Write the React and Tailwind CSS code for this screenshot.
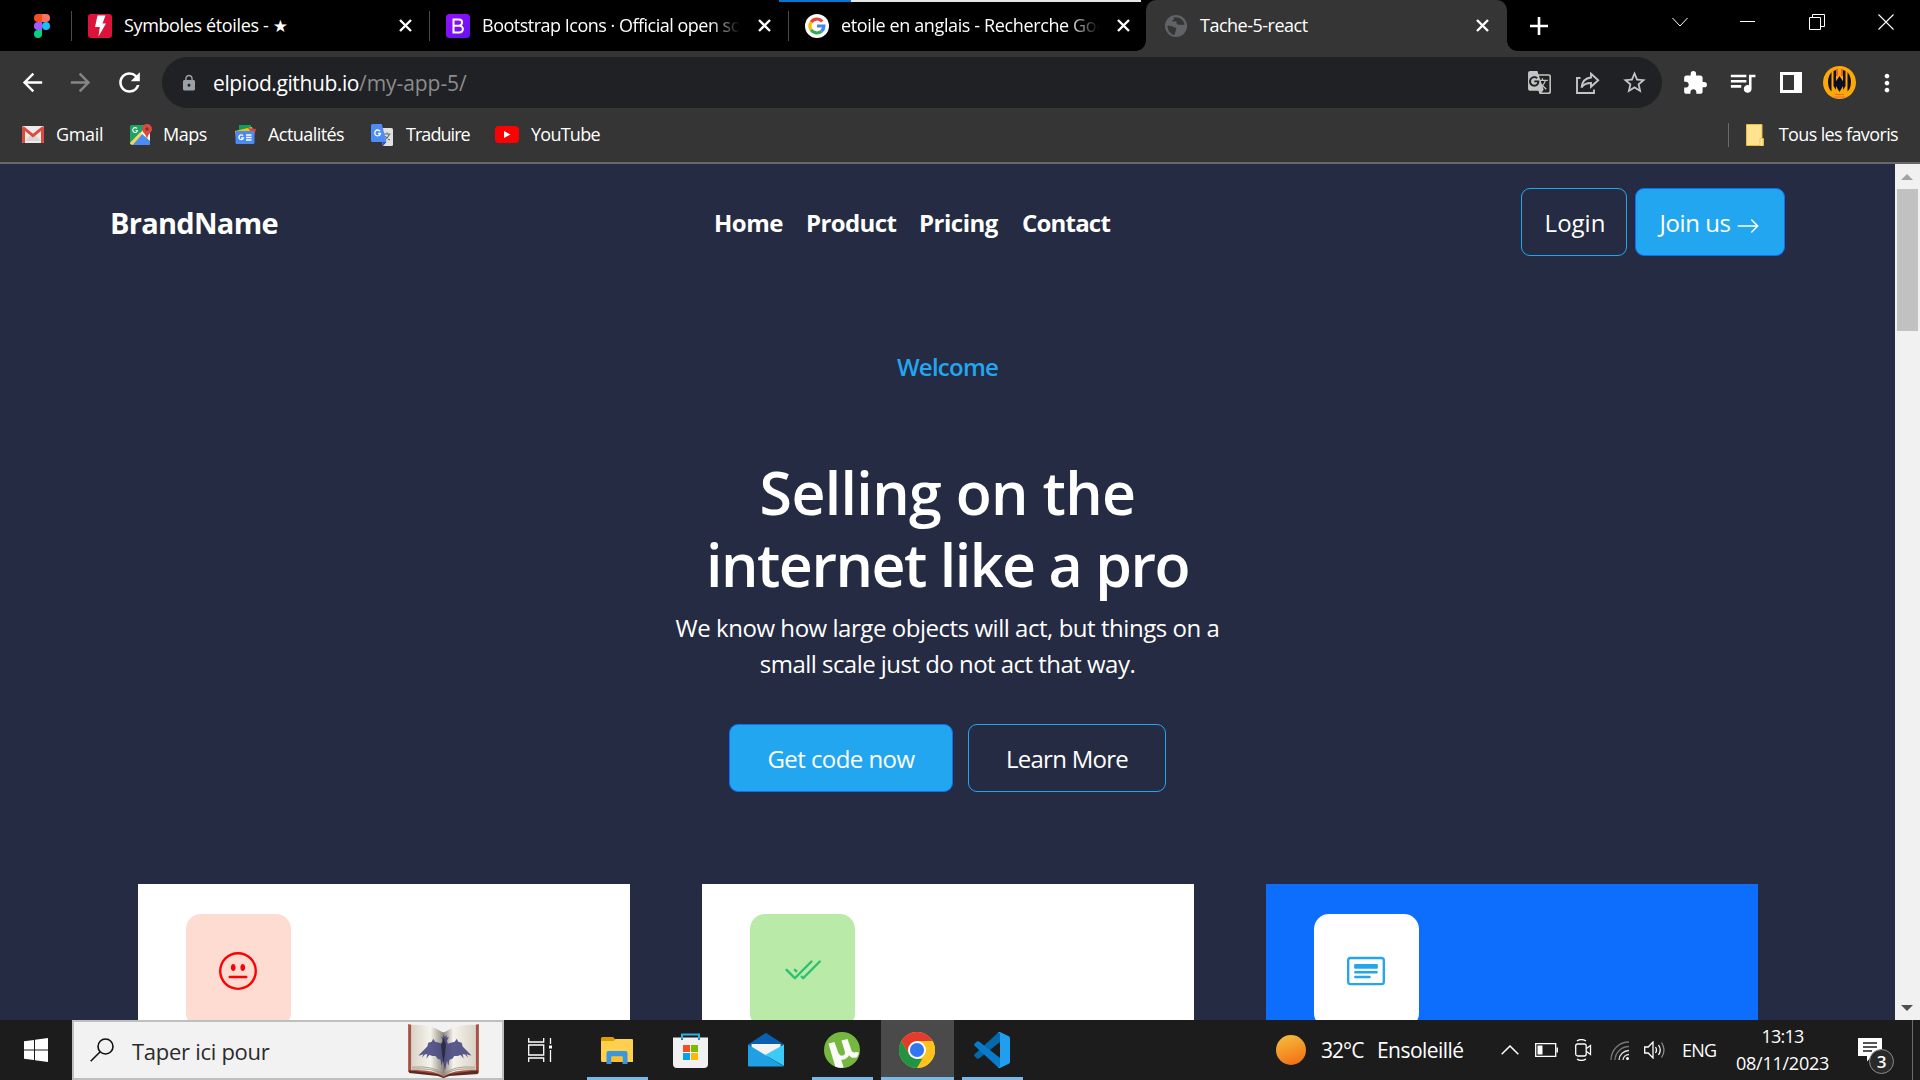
import React from "react";
import { BsArrowRight, BsCardHeading, BsCheck2All, BsEmojiNeutral } from "react-icons/bs";
import {
  MdArrowBack,
  MdArrowForward,
  MdExtension,
  MdGTranslate,
  MdLock,
  MdMoreVert,
  MdQueueMusic,
  MdRefresh,
  MdStarBorder,
} from "react-icons/md";

/* ---------- browser: tab strip ---------- */

function CloseX({ className }) {
  return (
    <svg viewBox="0 0 13 13" className={`h-[13px] w-[13px] shrink-0 ${className}`} fill="none" stroke="#fff" strokeWidth="2.4">
      <path d="M1 1l11 11M12 1L1 12" />
    </svg>
  );
}

function FigmaIcon() {
  return (
    <svg viewBox="0 0 16 24" className="ml-[34px] h-6 w-4 shrink-0">
      <path d="M4 0h4v8H4a4 4 0 010-8z" fill="#f24e1e" />
      <path d="M8 0h4a4 4 0 010 8H8z" fill="#ff7262" />
      <path d="M4 8h4v8H4a4 4 0 010-8z" fill="#a259ff" />
      <circle cx="12" cy="12" r="4" fill="#1abcfe" />
      <path d="M4 16h4v4a4 4 0 11-4-4z" fill="#0acf83" />
    </svg>
  );
}

function BoltIcon() {
  return (
    <svg viewBox="0 0 24 24" className="ml-4 h-6 w-6 shrink-0">
      <rect width="24" height="24" rx="3" fill="#dc143c" />
      <path d="M9.500 1.500h8L14.500 9.500H18L10.500 22.500 11.800 13H7z" fill="#fff" />
    </svg>
  );
}

function BootstrapIcon() {
  return (
    <svg viewBox="0 0 24 24" className="ml-4 h-6 w-6 shrink-0">
      <defs>
        <linearGradient id="bsGrad" x1="0" y1="0" x2="1" y2="1">
          <stop offset="0" stopColor="#9013fe" />
          <stop offset="1" stopColor="#6610f2" />
        </linearGradient>
      </defs>
      <rect width="24" height="24" rx="3.500" fill="url(#bsGrad)" />
      <path d="M7.500 5.500h5.500a3.100 3.100 0 010 6.200H7.500zM7.500 11.700h6a3.400 3.400 0 010 6.800h-6z" fill="none" stroke="#fff" strokeWidth="2" />
    </svg>
  );
}

function GoogleIcon() {
  return (
    <svg viewBox="0 0 24 24" className="ml-4 h-6 w-6 shrink-0" fill="none" strokeWidth="3.200">
      <circle cx="12" cy="12" r="12" fill="#fff" />
      <path d="M17.300 7.500A7 7 0 006.100 8.200" stroke="#ea4335" />
      <path d="M6.100 8.200a7 7 0 000 7.600" stroke="#fbbc05" />
      <path d="M6.100 15.800a7 7 0 0010.400 1.500" stroke="#34a853" />
      <path d="M16.500 17.300A7 7 0 0018.900 12H12" stroke="#4285f4" />
    </svg>
  );
}

function GlobeIcon() {
  return (
    <svg viewBox="0 0 22 22" className="ml-[19px] h-[22px] w-[22px] shrink-0">
      <circle cx="11" cy="11" r="11" fill="#5f6368" />
      <path d="M2.500 10.500c2 .5 4.500.2 6 1.500 1.500.4 3.500.6 2.500 3l-1.500 5C5.500 19.500 2.500 15.500 2.500 10.500z" fill="#353535" />
      <path d="M8.500 2.500C10 4 8 5 7 6c1 1.500 3-.5 4.500.5.500 1.500-.5 2 1 3s3.500-.5 5 .500l2-.5C19 5.500 14.500 1.500 8.500 2.500z" fill="#353535" />
    </svg>
  );
}

function TabStrip() {
  return (
    <div className="relative flex h-[51px] items-center bg-black text-[18px] whitespace-nowrap text-white">
      <div className="flex h-[30px] w-[71px] items-center"><FigmaIcon /></div>
      <div className="flex h-[30px] w-[358px] items-center border-l border-[#4a4a4a]">
        <BoltIcon />
        <span className="ml-[12px] w-[270px] tracking-[-0.36px]">Symboles étoiles - <span className="font-['DejaVu_Sans'] text-[17px]">★</span></span>
        <CloseX className="ml-[5px]" />
      </div>
      <div className="flex h-[30px] w-[359px] items-center border-l border-[#4a4a4a]">
        <BootstrapIcon />
        <span className="ml-[12px] w-[258px] overflow-hidden mask-r-from-88% mask-r-to-100% tracking-[-0.5px]">Bootstrap Icons · Official open source</span>
        <CloseX className="ml-[18px]" />
      </div>
      <div className="flex h-[30px] w-[358px] items-center border-l border-[#4a4a4a]">
        <GoogleIcon />
        <span className="ml-[12px] w-[258px] overflow-hidden mask-r-from-88% mask-r-to-100% tracking-[-0.38px]">etoile en anglais - Recherche Google</span>
        <CloseX className="ml-[18px]" />
      </div>
      <div className="relative flex h-[51px] w-[361px] items-center rounded-t-[10px] bg-[#353535]">
        <span className="absolute bottom-0 -left-2.5 h-2.5 w-2.5 bg-[radial-gradient(circle_at_0_0,transparent_9.5px,#353535_10px)]" />
        <span className="absolute -right-2.5 bottom-0 h-2.5 w-2.5 bg-[radial-gradient(circle_at_100%_0,transparent_9.5px,#353535_10px)]" />
        <GlobeIcon />
        <span className="ml-[13px] w-[260px] tracking-[-0.5px]">Tache-5-react</span>
        <CloseX className="ml-[16px]" />
      </div>
      <svg viewBox="0 0 18 18" className="ml-[23px] h-[18px] w-[18px]" stroke="#fff" strokeWidth="2.600"><path d="M9 0v18M0 9h18" /></svg>
      <div className="mb-2 ml-auto flex items-center pr-[26px]">
        <svg viewBox="0 0 16 16" className="h-4 w-4" fill="none" stroke="#fff"><path d="M.5 4l7.500 8 7.500-8" /></svg>
        <svg viewBox="0 0 15 16" className="ml-[52px] h-4 w-[15px]" fill="none" stroke="#fff"><path d="M0 7.500h15" /></svg>
        <svg viewBox="0 0 16 16" className="ml-[54px] h-4 w-4" fill="none" stroke="#fff"><path d="M.5 3.500h11v12H.5zM3.500 3.500v-3h12v12h-4" /></svg>
        <svg viewBox="0 0 16 16" className="ml-[53px] h-4 w-4" fill="none" stroke="#fff" strokeWidth="1.100"><path d="M.5.5l15 15M15.500.5l-15 15" /></svg>
      </div>
      <div className="absolute top-0 left-[779px] flex h-0.5 w-[362px] bg-[#e6e6e6]"><span className="h-0.5 w-[72px] bg-[#0078d7]" /></div>
    </div>
  );
}

/* ---------- browser: toolbar and bookmarks ---------- */

function Avatar() {
  return (
    <svg viewBox="0 0 33 33" className="ml-[21px] h-[33px] w-[33px]">
      <circle cx="16.500" cy="16.500" r="16.500" fill="#fba80a" />
      <path d="M6.500 9q-3 7 0 14l2 2.500V6zM26.500 9q3 7 0 14l-2 2.500V6z" fill="#17100a" />
      <path d="M10.500 5v15l2.500 4V4zM22.500 5v15L20 24V4z" fill="#17100a" />
      <path d="M16.500 10l5 7.500-5 8.500-5-8.500z" fill="#0b0b2c" />
      <path d="M14 3v7M19 3v7" stroke="#e02a50" strokeWidth="1.200" />
      <path d="M12 28.500h9M11 31h11" stroke="#f0673a" strokeWidth="1.200" />
    </svg>
  );
}

function Toolbar() {
  return (
    <div className="flex h-[63px] items-center bg-[#353535] text-white">
      <MdArrowBack className="ml-[18px] h-[29px] w-[29px]" />
      <MdArrowForward className="ml-[19px] h-[29px] w-[29px] text-[#868686]" />
      <MdRefresh className="ml-[19px] h-[31px] w-[31px]" />
      <div className="ml-[17px] flex h-[51px] w-[1500px] items-center rounded-full bg-[#202124] text-[21px] text-[#c4c4c4]">
        <MdLock className="ml-[18px] h-[18px] w-[18px] text-[#9aa0a6]" />
        <span className="ml-[15px] pt-0.5 tracking-[-0.07px] whitespace-nowrap text-[#8c8c8c]"><span className="tracking-[-0.4px] text-white">elpiod.github.io</span>/my-app-5/</span>
        <MdGTranslate className="ml-auto h-[25px] w-[25px]" />
        <svg viewBox="0 0 24 22" className="ml-6 h-[22px] w-6" fill="none" stroke="currentColor" strokeWidth="1.900">
          <path d="M4.500 6H1v15h17v-3.500" />
          <path d="M15 1.800l7.200 6.500-7.200 6.500v-3.800c-4.500 0-7.500 1.300-9.500 4.500.5-5.500 3.500-9.300 9.500-10z" />
        </svg>
        <MdStarBorder className="mr-[14px] ml-[21px] h-[27px] w-[27px]" />
      </div>
      <MdExtension className="ml-[20px] h-[26px] w-[26px]" />
      <MdQueueMusic className="ml-[19px] h-[31px] w-[31px]" />
      <svg viewBox="0 0 22 21" className="ml-[22px] h-[21px] w-[22px]"><path d="M0 0h22v21H0zM3 3v15h11V3z" fill="#fff" fillRule="evenodd" /></svg>
      <Avatar />
      <MdMoreVert className="ml-[17px] h-[28px] w-[28px]" />
    </div>
  );
}

function BookmarksBar() {
  return (
    <div className="flex h-[50px] items-center border-b-2 border-[#696868] bg-[#353535] pb-[7px] text-[18px] whitespace-nowrap text-white">
      <svg viewBox="0 0 22 17" className="mr-[12px] ml-[22px] h-[17px] w-[22px]">
        <rect width="22" height="17" rx="1.500" fill="#eceaea" />
        <path d="M3 15l5.500-6h5L19 15z" fill="#d8d5d5" />
        <path d="M0 1.500v14A1.500 1.500 0 001.500 17H3V5l8 6.500L19 5v12h1.500a1.500 1.500 0 001.500-1.500v-14L20 .5l-9 7.300L2 .5z" fill="#dd4b3e" />
      </svg>
      <span className="w-[74px] tracking-[-0.35px]">Gmail</span>
      <svg viewBox="0 0 22 22" className="h-[22px] w-[22px]">
        <rect y="1" width="20" height="20" rx="1.500" fill="#1da462" />
        <path d="M2 21L12 10l8 8v3z" fill="#4c8bf5" />
        <path d="M0 19L15 4l5 3v10l-8-7-9.500 10.500z" fill="#f4f4f4" />
        <path d="M0 19.500L10 8.500l2 1.800L2.500 21z" fill="#ffd34d" />
        <path d="M7 4.500a2.400 2.400 0 10.500 2H5.500" fill="none" stroke="#fff" strokeWidth="1.100" />
        <path d="M17 0a5 5 0 015 5c0 3.500-4 4.500-5 10-1-5.500-5-6.500-5-10a5 5 0 015-5z" fill="#dd4b3e" />
        <circle cx="17" cy="5" r="1.700" fill="#822f2b" />
      </svg>
      <span className="ml-[11px] w-[71px] tracking-[-0.45px]">Maps</span>
      <svg viewBox="0 0 22 19" className="h-[19px] w-[22px]">
        <path d="M5 0h12v8H5z" fill="#0f9d58" />
        <path d="M1 6l17-4 2 6L2 12z" fill="#f4c20d" />
        <path d="M14 3l8 1-2 7z" fill="#db4437" />
        <rect x="1.500" y="6" width="19" height="13" rx="1.500" fill="#4a8af4" />
        <path d="M9 10.800A2.300 2.300 0 109.400 13H7.300M12 10h5.500M12 12.500h5.500M12 15h5.500" fill="none" stroke="#fff" strokeWidth="1.300" />
      </svg>
      <span className="ml-[12px] w-[103px] tracking-[-0.55px]">Actualités</span>
      <svg viewBox="0 0 22 22" className="h-[22px] w-[22px]">
        <path d="M7 4h13.500A1.500 1.500 0 0122 5.500v15a1.500 1.500 0 01-1.500 1.500H12z" fill="#e1e1e1" />
        <path d="M12.500 10h7M16 8.500V10M18.500 10q-1.500 4-5 6M14 12q1.500 2.500 5 4" fill="none" stroke="#5f6f75" strokeWidth="1.100" />
        <path d="M1.500 0h9.300l4.700 18H1.500A1.500 1.500 0 010 16.500v-15A1.500 1.500 0 011.500 0z" fill="#4e8cf5" />
        <path d="M11 18h4.500L12 22z" fill="#3451b8" />
        <path d="M9 7.200A2.900 2.900 0 109.500 9.500H7" fill="none" stroke="#fff" strokeWidth="1.300" />
      </svg>
      <span className="ml-[13px] w-[89px] tracking-[-0.95px]">Traduire</span>
      <svg viewBox="0 0 24 17" className="h-[17px] w-6"><rect width="24" height="17" rx="4" fill="#f00" /><path d="M9 5l6.500 3.500L9 12z" fill="#fff" /></svg>
      <span className="ml-[12px] tracking-[-0.75px]">YouTube</span>
      <div className="ml-auto flex items-center pr-[22px]">
        <span className="h-6 w-px bg-[#6a6a6a]" />
        <svg viewBox="0 0 18 22" className="ml-[17px] h-[22px] w-[18px]"><path d="M.5.5h15.500v14h1.500v7H.5z" fill="#ffe391" stroke="#e9bd3e" /><path d="M14 21.500v-7h3v7" fill="#ffedb5" stroke="#e9bd3e" strokeWidth=".8" /></svg>
        <span className="ml-[15px] tracking-[-0.63px]">Tous les favoris</span>
      </div>
    </div>
  );
}

/* ---------- web page ---------- */

const buttonBase = "flex h-[68px] items-center justify-center rounded-[9px] border pt-0.5 text-2xl whitespace-nowrap";
const primary = "border-[#0d6efd] bg-[#23a6f0]";
const outline = "border-[#23a6f0]";

function SiteHeader() {
  return (
    <header className="flex h-[68px] items-center pr-[110px] pl-[110px] whitespace-nowrap">
      <div className="w-[604px] pt-0.5 text-[29px] font-bold tracking-[-0.72px]">BrandName</div>
      <nav className="flex pt-0.5 text-2xl font-bold">
        <a className="w-[92px] tracking-[-0.5px]">Home</a>
        <a className="w-[113px] tracking-[-0.6px]">Product</a>
        <a className="w-[103px] tracking-[-0.5px]">Pricing</a>
        <a className="tracking-[-0.8px]">Contact</a>
      </nav>
      <div className="ml-auto flex gap-2">
        <button className={`${buttonBase} ${outline} w-[106px] pl-0.5`}>Login</button>
        <button className={`${buttonBase} ${primary} w-[150px] tracking-[-0.45px]`}>Join us<BsArrowRight className="mt-1.5 ml-1.5 h-6 w-6" /></button>
      </div>
    </header>
  );
}

function Hero() {
  return (
    <section className="mt-[93px] flex flex-col items-center text-center text-2xl leading-9 whitespace-nowrap">
      <p className="font-semibold tracking-[-0.75px] text-[#23a6f0]">Welcome</p>
      <h1 className="mt-[71px] text-[59px] leading-[72px] font-semibold">
        <span className="block tracking-[-0.65px]">Selling on the</span>
        <span className="block tracking-[-1.45px]">internet like a pro</span>
      </h1>
      <p className="mt-[10px]">
        <span className="block tracking-[-0.46px]">We know how large objects will act, but things on a</span>
        <span className="block tracking-[-0.53px]">small scale just do not act that way.</span>
      </p>
      <div className="mt-[42px] flex gap-[15px]">
        <button className={`${buttonBase} ${primary} w-[224px] tracking-[-0.56px]`}>Get code now</button>
        <button className={`${buttonBase} ${outline} w-[198px] tracking-[-0.75px]`}>Learn More</button>
      </div>
    </section>
  );
}

function FeatureCard({ card, tile, children }) {
  return (
    <article className={`h-[300px] w-[492px] shrink-0 pt-[30px] pl-12 ${card}`}>
      <div className={`flex h-[114px] w-[105px] items-center justify-center rounded-[15px] pr-0.5 ${tile}`}>{children}</div>
    </article>
  );
}

function Scrollbar() {
  return (
    <div className="flex w-[25px] flex-col items-center bg-[#f1f1f1]">
      <svg viewBox="0 0 12 6" className="mt-[10px] mr-0.5 h-1.5 w-3"><path d="M6 0l6 6H0z" fill="#a3a3a3" /></svg>
      <div className="mt-[9px] h-[142px] w-[21px] bg-[#c1c1c1]" />
      <svg viewBox="0 0 12 6" className="mt-auto mr-0.5 mb-[9px] h-1.5 w-3"><path d="M6 6l6-6H0z" fill="#505050" /></svg>
    </div>
  );
}

function WebPage() {
  return (
    <div className="flex h-[856px] overflow-hidden bg-[#252b42] text-white">
      <main className="h-[856px] w-[1895px] overflow-hidden pt-6">
        <SiteHeader />
        <Hero />
        <section className="mt-[92px] flex gap-[72px] pl-[138px]">
          <FeatureCard card="bg-white" tile="bg-[#ffdcd1]"><BsEmojiNeutral className="h-[38px] w-[38px] text-[#ff0000]" /></FeatureCard>
          <FeatureCard card="bg-white" tile="bg-[#b9eaa8]"><BsCheck2All className="h-[38px] w-[38px] text-[#2dc071]" /></FeatureCard>
          <FeatureCard card="bg-[#0d6efd]" tile="bg-white"><BsCardHeading className="h-[38px] w-[38px] text-[#23a6f0]" /></FeatureCard>
        </section>
      </main>
      <Scrollbar />
    </div>
  );
}

/* ---------- taskbar ---------- */

function BookArt() {
  return (
    <svg viewBox="0 0 72 56" className="ml-auto h-[55px] w-[71px]">
      <defs>
        <linearGradient id="pageL" x1="0" x2="1"><stop offset="0" stopColor="#d9d2c6" /><stop offset=".6" stopColor="#f6f3ec" /><stop offset="1" stopColor="#8e877c" /></linearGradient>
        <linearGradient id="pageR" x1="0" x2="1"><stop offset="0" stopColor="#8e877c" /><stop offset=".3" stopColor="#f6f3ec" /><stop offset="1" stopColor="#d9d2c6" /></linearGradient>
      </defs>
      <path d="M0 1l4 1 32 8 32-8 4-1v50l-30 2-6 3-6-3-30-3z" fill="#a65245" />
      <path d="M1 48l29 4 6 3 6-3 29-4v4l-29 2-6 2-6-2-29-3z" fill="#5d2a24" />
      <path d="M3 2q20-1 33 8v44Q24 47 3 48z" fill="url(#pageL)" />
      <path d="M69 2q-20-1-33 8v44q12-7 33-6z" fill="url(#pageR)" />
      <path d="M4 45q21-2 32 7 11-9 32-7M4 47q21-2 32 6 11-8 32-6" fill="none" stroke="#98907f" strokeWidth=".8" />
      <path
        d="M36 15l1.500-1 2-2-.5 3 2.500-1-2 4 1 3 3-1 4-1 2-3 1.500 3 3.500 1 1 4 3 3 6 6-3-.5-2-1 1.500 4-3-3.500-2.500-.5 1 5-3-4-3.500 1-3 0-2 3-3 1-1 6-1.500-5-2 10-2-10-1.500 5-1-6-3-1-2-3-3 0-3.500-1-3 4 1-5-2.500.5-3 3.500 1.500-4-2 1-3 .5 6-6 3-3 1-4 3.500-1 1.500-3 2 3 4 1 3 1 1-3-2-4 2.500 1-.5-3 2 2z"
        fill="#44447e"
        opacity=".88"
      />
      <path d="M36 15l2.500 7-1 10-1.500 9-1.500-9-1-10z" fill="#20202e" opacity=".7" />
    </svg>
  );
}

function SearchBox() {
  return (
    <div className="flex h-[60px] w-[432px] items-center border-2 border-[#bfbfbf] bg-[#f2f2f2] pr-[23px] pl-4">
      <svg viewBox="0 0 24 24" className="h-6 w-6" fill="none" stroke="#111" strokeWidth="1.600"><circle cx="15.500" cy="8.500" r="7.500" /><path d="M10.200 13.800L.7 23.300" /></svg>
      <span className="mt-0.5 ml-[18px] text-[22px] tracking-[-0.28px] whitespace-nowrap text-[#2b2b2b]">Taper ici pour</span>
      <BookArt />
    </div>
  );
}

function AppSlot({ className, children, running = true }) {
  return (
    <div className={`relative flex h-[60px] items-center justify-center pr-0.5 ${className}`}>
      {children}
      {running && <span className="absolute inset-x-0 bottom-0 h-[3px] bg-[#76b9ed]" />}
    </div>
  );
}

function FolderIcon() {
  return (
    <svg viewBox="0 0 32 27" className="h-[27px] w-8">
      <path d="M0 1.500A1.500 1.500 0 011.500 0H12l2.500 2.500V5H0z" fill="#e09b00" />
      <path d="M0 4h12.500l2-2H31a1 1 0 011 1v22H1.500A1.500 1.500 0 010 23.500z" fill="#ffcf4e" />
      <path d="M5.500 27V16a2 2 0 012-2h17a2 2 0 012 2v11h-5v-7.500h-11V27z" fill="#3c96dc" />
      <path d="M10.500 19.500h11V25h-11z" fill="#fdbf2b" />
    </svg>
  );
}

function StoreIcon() {
  return (
    <svg viewBox="0 0 35 36" className="mt-0.5 h-9 w-[35px]">
      <path d="M9 7V1.500h17V7" fill="none" stroke="#29b4e8" strokeWidth="2" />
      <path d="M0 4.500h35V31a4 4 0 01-4 4H4a4 4 0 01-4-4z" fill="#f1f1f1" />
      <path d="M9 7V4.500M26 7V4.500" stroke="#1a86c9" strokeWidth="2" />
      <path d="M10 12h7v7h-7z" fill="#f25022" /><path d="M18 12h7v7h-7z" fill="#7fba00" />
      <path d="M10 20h7v7h-7z" fill="#00a4ef" /><path d="M18 20h7v7h-7z" fill="#ffb900" />
    </svg>
  );
}

function MailIcon() {
  return (
    <svg viewBox="0 0 36 34" className="h-[34px] w-9">
      <path d="M0 11.500L17 .4q1-.6 2 0l17 11.100-18 11z" fill="#0a5fb0" />
      <path d="M3.500 11h29v4L18 24 3.500 15z" fill="#f3f3f3" />
      <path d="M36 11.500V33L17 22z" fill="#3ccbf4" />
      <path d="M0 11.500L36 33.500H1a1 1 0 01-1-1z" fill="#1f9fe4" />
    </svg>
  );
}

function TorrentIcon() {
  return (
    <svg viewBox="0 0 36 36" className="h-9 w-9">
      <circle cx="18" cy="18" r="18" fill="#76b83f" />
      <path d="M4.500 11.500l6-1.500 3.700 10.500c.9 2.500 2.600 3.600 4.700 3 2.200-.7 2.400-2.500 1.700-4.700L17.500 8.500l6-1.500 4 11.500c.8 2 2.500 2.300 4.500 1.500l3 .5q-.5 2.500-2 4.800c-3.500 1.200-6.500.4-8-2-1 2.700-4.800 4.700-7.800 4.500l2.500 7.700q-4.500.8-8.500-1z" fill="#fafafa" />
    </svg>
  );
}

function ChromeIcon() {
  return (
    <svg viewBox="0 0 36 36" className="h-9 w-9">
      <circle cx="18" cy="18" r="18" fill="#fcc31e" />
      <path d="M2.400 9A18 18 0 0133.600 9H18l-7.800 13.500z" fill="#e33b2e" />
      <path d="M2.400 9l7.800 13.500L18 27h7.800L18 36A18 18 0 012.400 9z" fill="#229342" />
      <path d="M18 9h15.600A18 18 0 0118 36l7.800-13.500z" fill="#fcc31e" />
      <circle cx="18" cy="18" r="9" fill="#fff" />
      <circle cx="18" cy="18" r="7.100" fill="#2f78f0" />
    </svg>
  );
}

function CodeIcon() {
  return (
    <svg viewBox="0 0 36 36" className="h-9 w-9">
      <path d="M26 0v10L5 26.500q-1 .7-2 0L.6 24.300q-1-1 0-2L24 .8z" fill="#0469ab" />
      <path d="M26 36V26L5 9.500q-1-.7-2 0L.6 11.700q-1 1 0 2L24 35.200z" fill="#087ccb" />
      <path d="M26 0l8.800 4.200Q36 4.800 36 6v24q0 1.200-1.200 1.800L26 36q-1.500.2-2.500-1 2.500.8 2.500-1.500v-31Q26 .2 23.500 1 24.500-.2 26 0z" fill="#229eee" />
    </svg>
  );
}

function Taskbar() {
  return (
    <footer className="flex h-[60px] items-center bg-[#1c1c1c] whitespace-nowrap text-white">
      <svg viewBox="0 0 24 24" className="mr-6 ml-6 h-6 w-6 shrink-0 fill-white"><path d="M0 3.300l10-1.400v9.600H0zM11 1.700L24 0v11.500H11zM0 12.500h10v9.600L0 20.700zM11 12.500h13V24l-13-1.700z" /></svg>
      <SearchBox />
      <svg viewBox="0 0 24 24" className="ml-6 h-6 w-6 shrink-0" fill="none" stroke="#fff" strokeWidth="1.300"><path d="M.7 0v4h15V0M.7 7h15v10H.7zM.7 24v-4h15v4M22.500 0v6M22.500 12v12" /><path d="M21 7.500h3v3h-3z" fill="#fff" stroke="none" /></svg>
      <AppSlot className="ml-[35px] w-[61px]"><FolderIcon /></AppSlot>
      <AppSlot className="ml-[13px] w-[61px]" running={false}><StoreIcon /></AppSlot>
      <AppSlot className="ml-[14px] w-[61px]" running={false}><MailIcon /></AppSlot>
      <AppSlot className="ml-[15px] w-[61px]"><TorrentIcon /></AppSlot>
      <AppSlot className="ml-2 w-[73px] bg-[#4a4a4a]"><ChromeIcon /></AppSlot>
      <AppSlot className="ml-2 w-[61px]"><CodeIcon /></AppSlot>

      <div className="ml-auto flex h-[60px] items-center">
        <span className="h-[30px] w-[30px] rounded-full bg-linear-160 from-[#f2c13c] to-[#f0650e]" />
        <span className="mt-0.5 ml-[15px] w-[56px] text-[21px] tracking-[-0.95px]">32°C</span>
        <span className="mt-0.5 w-[124px] text-[21px] tracking-[-0.55px]">Ensoleillé</span>
        <svg viewBox="0 0 18 10" className="h-2.5 w-[18px]" fill="none" stroke="#fff" strokeWidth="1.500"><path d="M.7 9.300L9 1l8.300 8.300" /></svg>
        <svg viewBox="0 0 23 14" className="ml-4 h-3.5 w-[23px]" fill="none" stroke="#fff" strokeWidth="1.300"><path d="M.7.7h20v12.600H.7zM22.300 4.500v5" /><path d="M2.500 2.500h5v9h-5z" fill="#fff" stroke="none" /></svg>
        <svg viewBox="0 0 17 22" className="ml-[17px] h-[22px] w-[17px]" fill="none" stroke="#fff" strokeWidth="1.300"><rect x=".7" y="5" width="10.500" height="12" rx="2" /><path d="M11.500 9.500l4-3v9l-4-3M2 2q4-3 9 0M2 20q4 3 9 0" /></svg>
        <svg viewBox="0 0 19 19" className="ml-[18px] h-[19px] w-[19px]" fill="none" strokeWidth="1.300"><path d="M1 19A18 18 0 0119 1M5 19A14 14 0 0119 5.500" stroke="#777" /><path d="M9 19a10 10 0 0110-9.500M13 19a6 6 0 016-5.500" stroke="#ddd" /><circle cx="17.500" cy="17.500" r="1.500" fill="#fff" /></svg>
        <svg viewBox="0 0 22 18" className="ml-[15px] h-[18px] w-[22px]" fill="none" stroke="#fff" strokeWidth="1.300"><path d="M.7 6h3.500L9 1v16l-4.800-5H.7zM11.500 6q2 3 0 6M14.500 4q3.500 5 0 10" /><path d="M17.500 1.500q5 7.500 0 15" stroke="#888" /></svg>
        <span className="ml-4 w-[53px] text-[18px] tracking-[-0.8px]">ENG</span>
        <div className="flex w-[95px] flex-col items-center text-[18px] leading-[27px]">
          <span className="tracking-[-0.8px]">13:13</span>
          <span className="tracking-[-0.25px]">08/11/2023</span>
        </div>
        <div className="relative ml-7 h-6 w-6">
          <svg viewBox="0 0 24 24" className="h-6 w-6"><path d="M0 0h24v18H14l-5 5.500V18H0z" fill="#fff" /><path d="M5 5h14M5 9h14M5 13h9" stroke="#1c1c1c" strokeWidth="1.300" /></svg>
          <span className="absolute top-[11px] left-[11px] flex h-[25px] w-[25px] items-center justify-center rounded-full border border-[#8a8a8a] bg-[#2a2a2a] text-[17px] leading-none font-semibold">3</span>
        </div>
        <span className="mr-[7px] ml-[30px] h-[60px] w-px bg-[#6b6b6b]" />
      </div>
    </footer>
  );
}

export default function App() {
  return (
    <div className="h-[1080px] w-[1920px] overflow-hidden bg-[#353535] font-['Open_Sans','Noto_Sans',sans-serif]">
      <TabStrip />
      <Toolbar />
      <BookmarksBar />
      <WebPage />
      <Taskbar />
    </div>
  );
}
